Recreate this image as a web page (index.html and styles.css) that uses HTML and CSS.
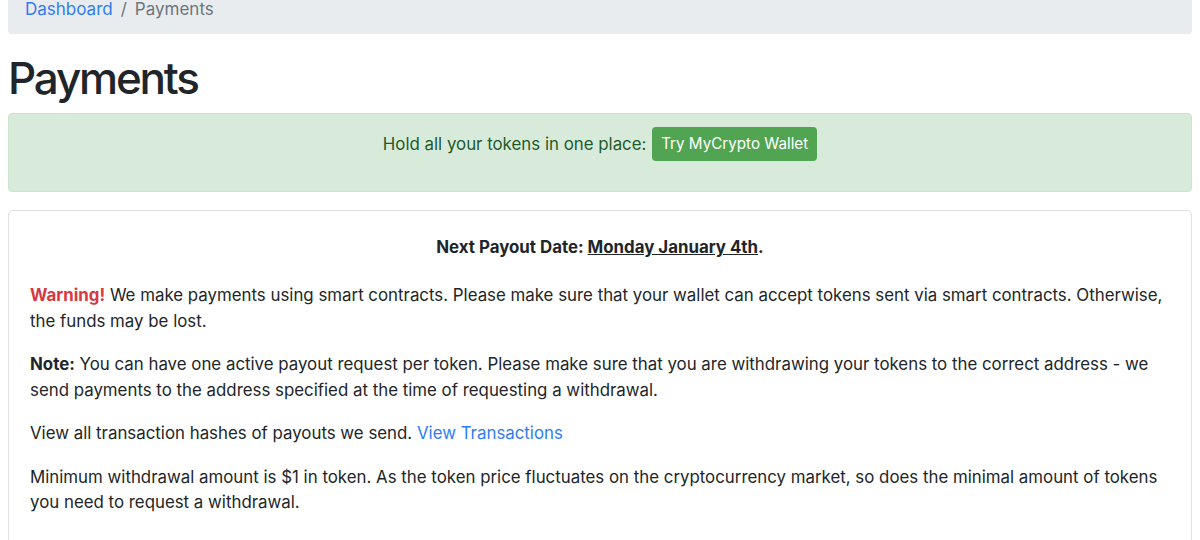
FILE: index.html
```html
<!DOCTYPE html>
<html lang="en">
<head>
<meta charset="utf-8">
<title>Payments</title>
<link rel="stylesheet" href="styles.css">
</head>
<body>
<div class="page">
  <nav class="breadcrumb">
    <a href="#" class="crumb-link">Dashboard</a>
    <span class="crumb-sep">/</span>
    <span class="crumb-active">Payments</span>
  </nav>
  <h1 class="title">Payments</h1>
  <div class="alert">
    <p class="alert-line">Hold all your tokens in one place: <a href="#" class="btn">Try MyCrypto Wallet</a></p>
  </div>
  <div class="card">
    <p class="payout"><strong>Next Payout Date: <u>Monday January 4th</u>.</strong></p>
    <p><strong class="danger">Warning!</strong> We make payments using smart contracts. Please make sure that your wallet can accept tokens sent via smart contracts. Otherwise, the funds may be lost.</p>
    <p><strong>Note:</strong> You can have one active payout request per token. Please make sure that you are withdrawing your tokens to the correct address - we send payments to the address specified at the time of requesting a withdrawal.</p>
    <p>View all transaction hashes of payouts we send. <a href="#" class="link">View Transactions</a></p>
    <p>Minimum withdrawal amount is $1 in token. As the token price fluctuates on the cryptocurrency market, so does the minimal amount of tokens you need to request a withdrawal.</p>
  </div>
</div>
</body>
</html>
```

FILE: styles.css
```css
* { box-sizing: border-box; }
html, body { margin: 0; padding: 0; background: #fff; }
body {
  font-family: Inter, "Noto Sans", "Liberation Sans", sans-serif;
  font-size: 16.85px;
  line-height: 25.5px;
  color: #212529;
}
.page { padding: 0 8px; }
.breadcrumb {
  margin-top: -15px;
  background: #e9ecef;
  border-radius: 4px;
  padding: 12px 17px 13px;
  line-height: 24px;
  font-size: 17px;
  display: flex;
}
.crumb-link { color: #2f7cf6; text-decoration: none; }
.crumb-sep { color: #6c757d; padding: 0 8px; }
.crumb-active { color: #6c757d; }
.title {
  margin: 17px 0 8px;
  font-size: 44px;
  line-height: 54px;
  font-weight: 500;
  letter-spacing: -2.2px;
}
.alert {
  background: #d8ebdb;
  border: 1px solid #c9e5cf;
  border-radius: 4px;
  color: #1e5a2a;
  padding: 13px 20px 13px;
  margin-bottom: 18px;
  text-align: center;
}
.alert-line { margin: 0 0 17px; line-height: 34px; }
.btn {
  display: inline-block;
  background: #51a452;
  color: #fff;
  text-decoration: none;
  border-radius: 4px;
  font-size: 15.2px;
  line-height: 34px;
  padding: 0 9px;
  margin-left: 1px;
  vertical-align: top;
}
.card {
  border: 1px solid #e0e0e0;
  border-radius: 5px;
  padding: 24px 21px 10px;
  min-height: 400px;
}
.card p { margin: 0 0 18px; }
.card .payout { text-align: center; margin-bottom: 22.5px; }
.danger { color: #d6393f; }
.link { color: #2f7cf6; text-decoration: none; }
```
